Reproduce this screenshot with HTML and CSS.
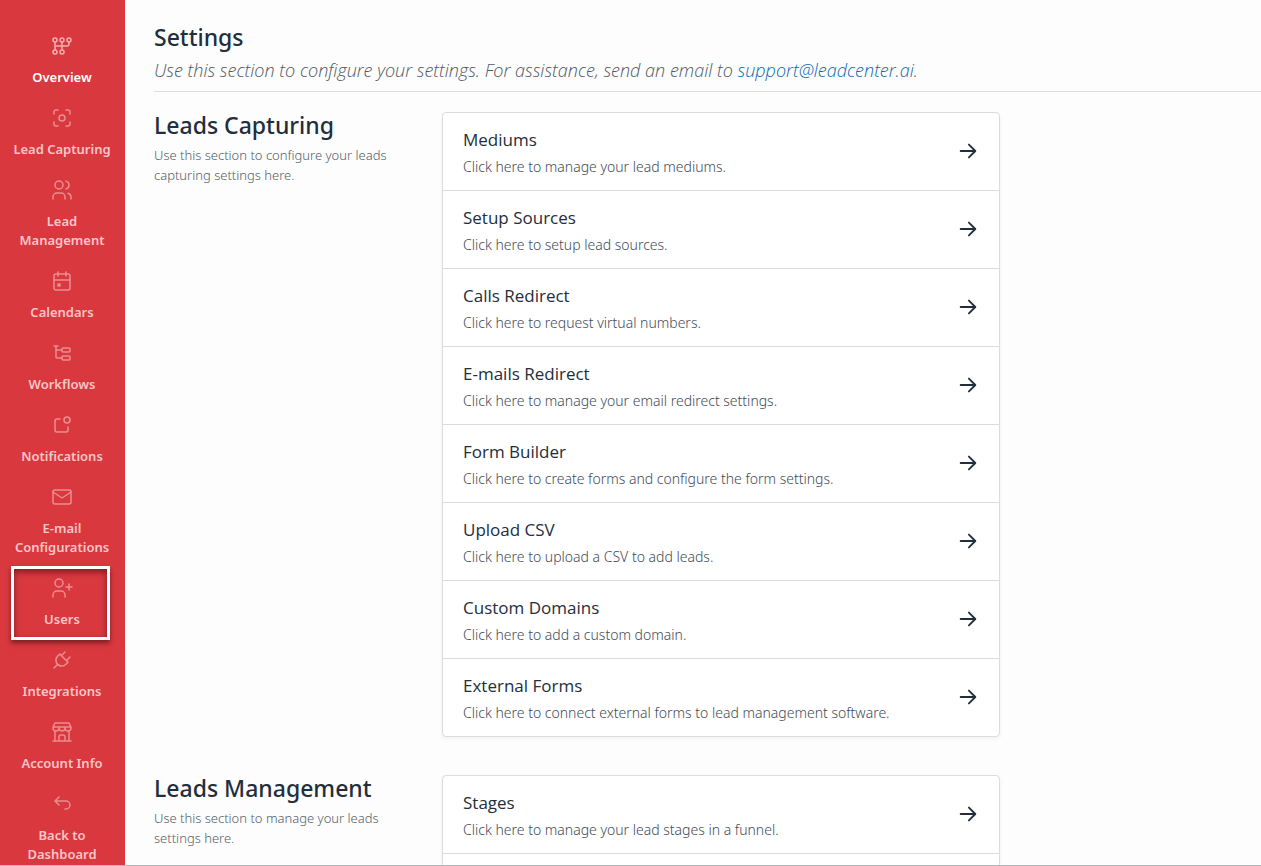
FILE: index.html
```html
<!DOCTYPE html>
<html lang="en">
<head>
<meta charset="utf-8">
<meta name="viewport" content="width=device-width, initial-scale=1">
<title>Settings</title>
<link rel="stylesheet" href="styles.css">
</head>
<body>
<div class="app">
  <nav class="sidebar" aria-label="Settings sections">
    <ul class="nav">
      <li class="nav-item"><a class="nav-link active" href="#overview">
        <svg class="icon" viewBox="0 0 24 24"><circle cx="5" cy="6" r="2"/><circle cx="12" cy="6" r="2"/><circle cx="19" cy="6" r="2"/><circle cx="5" cy="18" r="2"/><circle cx="12" cy="18" r="2"/><path d="M5 8v8M12 8v8M19 8v2a2 2 0 0 1-2 2H5"/></svg>
        <span>Overview</span></a></li>
      <li class="nav-item"><a class="nav-link" href="#capturing">
        <svg class="icon" viewBox="0 0 24 24"><path d="M4 8V6a2 2 0 0 1 2-2h2M4 16v2a2 2 0 0 0 2 2h2M16 4h2a2 2 0 0 1 2 2v2M16 20h2a2 2 0 0 0 2-2v-2"/><circle cx="12" cy="12" r="3"/></svg>
        <span>Lead Capturing</span></a></li>
      <li class="nav-item"><a class="nav-link" href="#management">
        <svg class="icon" viewBox="0 0 24 24"><circle cx="9" cy="7" r="4"/><path d="M3 21v-2a4 4 0 0 1 4-4h4a4 4 0 0 1 4 4v2M16 3.130a4 4 0 0 1 0 7.750M21 21v-2a4 4 0 0 0-3-3.850"/></svg>
        <span>Lead Management</span></a></li>
      <li class="nav-item"><a class="nav-link" href="#calendars">
        <svg class="icon" viewBox="0 0 24 24"><rect x="4" y="5" width="16" height="16" rx="2"/><path d="M16 3v4M8 3v4M4 11h16"/><rect x="8" y="15" width="2" height="2"/></svg>
        <span>Calendars</span></a></li>
      <li class="nav-item"><a class="nav-link" href="#workflows">
        <svg class="icon" viewBox="0 0 24 24"><path d="M6 9h6M4 5h4M6 5v11a1 1 0 0 0 1 1h5"/><rect x="12" y="7" width="8" height="4" rx="1"/><rect x="12" y="15" width="8" height="4" rx="1"/></svg>
        <span>Workflows</span></a></li>
      <li class="nav-item"><a class="nav-link" href="#notifications">
        <svg class="icon" viewBox="0 0 24 24"><path d="M10 6H7a2 2 0 0 0-2 2v9a2 2 0 0 0 2 2h9a2 2 0 0 0 2-2v-3"/><circle cx="17" cy="7" r="3"/></svg>
        <span>Notifications</span></a></li>
      <li class="nav-item"><a class="nav-link" href="#email">
        <svg class="icon" viewBox="0 0 24 24"><rect x="3" y="5" width="18" height="14" rx="2"/><path d="M3 7l9 6 9-6"/></svg>
        <span>E-mail Configurations</span></a></li>
      <li class="nav-item highlighted"><a class="nav-link" href="#users">
        <svg class="icon" viewBox="0 0 24 24"><circle cx="9" cy="7" r="4"/><path d="M3 21v-2a4 4 0 0 1 4-4h4a4 4 0 0 1 4 4v2M16 11h6M19 8v6"/></svg>
        <span>Users</span></a></li>
      <li class="nav-item"><a class="nav-link" href="#integrations">
        <svg class="icon" viewBox="0 0 24 24"><path d="M9.785 6L18 14.215l-2.054 2.054a5.810 5.810 0 1 1-8.215-8.215zM4 20l3.500-3.500M15 4l-3.500 3.500M20 9l-3.500 3.500"/></svg>
        <span>Integrations</span></a></li>
      <li class="nav-item"><a class="nav-link" href="#account">
        <svg class="icon" viewBox="0 0 24 24"><path d="M3 21h18M3 7v1a3 3 0 0 0 6 0V7m0 1a3 3 0 0 0 6 0V7m0 1a3 3 0 0 0 6 0V7H3l2-4h14l2 4M5 21V10.850M19 21V10.850M9 21v-4a2 2 0 0 1 2-2h2a2 2 0 0 1 2 2v4"/></svg>
        <span>Account Info</span></a></li>
      <li class="nav-item"><a class="nav-link" href="#dashboard">
        <svg class="icon" viewBox="0 0 24 24"><path d="M9 13L5 9l4-4M5 9h11a4 4 0 0 1 0 8h-1"/></svg>
        <span>Back to Dashboard</span></a></li>
    </ul>
  </nav>

  <main class="content">
    <header class="page-header">
      <h1 class="heading">Settings</h1>
      <p class="intro">Use this section to configure your settings. For assistance, send an email to <a class="mail-link" href="mailto:support@leadcenter.ai">support@leadcenter.ai</a>.</p>
    </header>

    <section class="group">
      <div class="group-info">
        <h2 class="heading">Leads Capturing</h2>
        <p class="group-text">Use this section to configure your leads capturing settings here.</p>
      </div>
      <div class="group-body">
        <div class="card">
          <a class="row" href="#mediums"><div><h3 class="row-title">Mediums</h3><p class="row-text">Click here to manage your lead mediums.</p></div><svg class="arrow" viewBox="0 0 24 24"><path d="M4 12h15M13 5l7 7-7 7"/></svg></a>
          <a class="row" href="#sources"><div><h3 class="row-title">Setup Sources</h3><p class="row-text">Click here to setup lead sources.</p></div><svg class="arrow" viewBox="0 0 24 24"><path d="M4 12h15M13 5l7 7-7 7"/></svg></a>
          <a class="row" href="#calls"><div><h3 class="row-title">Calls Redirect</h3><p class="row-text">Click here to request virtual numbers.</p></div><svg class="arrow" viewBox="0 0 24 24"><path d="M4 12h15M13 5l7 7-7 7"/></svg></a>
          <a class="row" href="#emails"><div><h3 class="row-title">E-mails Redirect</h3><p class="row-text">Click here to manage your email redirect settings.</p></div><svg class="arrow" viewBox="0 0 24 24"><path d="M4 12h15M13 5l7 7-7 7"/></svg></a>
          <a class="row" href="#forms"><div><h3 class="row-title">Form Builder</h3><p class="row-text">Click here to create forms and configure the form settings.</p></div><svg class="arrow" viewBox="0 0 24 24"><path d="M4 12h15M13 5l7 7-7 7"/></svg></a>
          <a class="row" href="#csv"><div><h3 class="row-title">Upload CSV</h3><p class="row-text">Click here to upload a CSV to add leads.</p></div><svg class="arrow" viewBox="0 0 24 24"><path d="M4 12h15M13 5l7 7-7 7"/></svg></a>
          <a class="row" href="#domains"><div><h3 class="row-title">Custom Domains</h3><p class="row-text">Click here to add a custom domain.</p></div><svg class="arrow" viewBox="0 0 24 24"><path d="M4 12h15M13 5l7 7-7 7"/></svg></a>
          <a class="row" href="#external"><div><h3 class="row-title">External Forms</h3><p class="row-text">Click here to connect external forms to lead management software.</p></div><svg class="arrow" viewBox="0 0 24 24"><path d="M4 12h15M13 5l7 7-7 7"/></svg></a>
        </div>
      </div>
    </section>

    <section class="group">
      <div class="group-info">
        <h2 class="heading">Leads Management</h2>
        <p class="group-text">Use this section to manage your leads settings here.</p>
      </div>
      <div class="group-body">
        <div class="card">
          <a class="row" href="#stages"><div><h3 class="row-title">Stages</h3><p class="row-text">Click here to manage your lead stages in a funnel.</p></div><svg class="arrow" viewBox="0 0 24 24"><path d="M4 12h15M13 5l7 7-7 7"/></svg></a>
          <div class="row row-empty"></div>
        </div>
      </div>
    </section>
  </main>
</div>
</body>
</html>
```
FILE: styles.css
```css
* {
  box-sizing: border-box;
}

body {
  margin: 0;
  background: #fdfdfd;
  color: #232e3c;
  font-family: "Segoe UI", "Noto Sans", "Open Sans", sans-serif;
}

h1, h2, h3, p, ul {
  margin: 0;
  padding: 0;
}

a {
  color: inherit;
  text-decoration: none;
}

svg {
  fill: none;
  stroke: currentColor;
  stroke-linecap: round;
  stroke-linejoin: round;
}

.app {
  display: flex;
  height: 100vh;
  overflow: hidden;
  border-bottom: 1px solid #b0b8b8;
}

.sidebar {
  flex: none;
  width: 125px;
  overflow: hidden;
  padding: 24px 6px 0 5px;
  background: #d9393e;
}

.nav {
  list-style: none;
}

.nav-item {
  position: relative;
}

.nav-link {
  display: flex;
  flex-direction: column;
  align-items: center;
  gap: 10px;
  padding: 10px 5px 9px;
  color: #f8c6c8;
  font-size: 13px;
  font-weight: 600;
  line-height: 19px;
  text-align: center;
}

.nav-link.active {
  color: #fff;
}

.icon {
  width: 24px;
  height: 24px;
  stroke-width: 1.5;
  opacity: 0.6;
}

.highlighted::after {
  content: "";
  position: absolute;
  inset: 0 9px -2px 6px;
  border: 3px solid #fff;
  box-shadow: 0 3px 5px rgba(60, 10, 15, 0.6), inset 0 3px 6px rgba(60, 10, 15, 0.6);
  pointer-events: none;
}

.content {
  flex: 1;
  min-width: 0;
  overflow: hidden;
  padding: 21px 0 0 29px;
}

.page-header {
  margin-bottom: 20px;
  padding-bottom: 6px;
  border-bottom: 1px solid #dadcde;
}

.heading {
  font-size: 23px;
  font-weight: 500;
  line-height: 32px;
}

.intro {
  padding-top: 2px;
  color: #4f5863;
  font-family: "Segoe UI", "Open Sans", "Noto Sans", sans-serif;
  font-size: 18px;
  font-style: italic;
  font-weight: 300;
  line-height: 30px;
}

.mail-link {
  color: #0f68b0;
}

.group {
  display: flex;
  margin: 0 -45px 38px 0;
}

.group-info {
  width: 25%;
  padding-right: 18px;
}

.group-info .heading {
  margin: -3px 0 4px;
}

.group-text {
  color: #555e69;
  font-size: 13px;
  font-weight: 300;
  line-height: 20px;
}

.group-body {
  width: 50%;
  padding-right: 18px;
}

.card {
  border: 1px solid #dadcde;
  border-radius: 4px;
  background: #fff;
  box-shadow: 0 2px 4px rgba(35, 46, 60, 0.05);
}

.row {
  display: flex;
  align-items: center;
  justify-content: space-between;
  padding: 12px 20px;
  border-bottom: 1px solid #dadcde;
}

.row:last-child {
  border-bottom: 0;
}

.row-empty {
  height: 78px;
}

.row-title {
  font-family: "Segoe UI", "Open Sans", "Noto Sans", sans-serif;
  font-size: 17px;
  font-weight: 400;
  line-height: 30px;
}

.row-text {
  color: #424b57;
  font-size: 14px;
  font-weight: 300;
  line-height: 23px;
}

.arrow {
  width: 22px;
  height: 22px;
  margin-bottom: 1px;
  stroke-width: 2;
}
```
